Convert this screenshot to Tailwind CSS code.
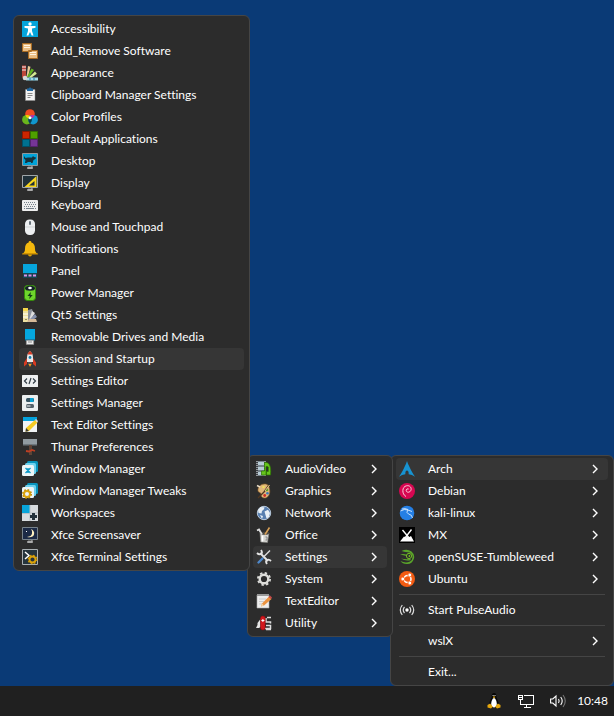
<!DOCTYPE html>
<html lang="en">
<head>
<meta charset="utf-8">
<title>Desktop menu</title>
<script src="https://cdn.jsdelivr.net/npm/@tailwindcss/browser@4"></script>
</head>
<body class="flex min-h-screen flex-col bg-[#0a3a76] font-[Lato,'Open_Sans',sans-serif] text-xs text-white [font-variant-ligatures:none]">
<main class="relative grow">
  <div id="root-menu" role="menu" aria-label="Distributions" class="absolute right-0 bottom-0 w-56 rounded-md border border-[#454545] bg-[#2c2c2c] px-[5px] py-0.5"></div>
  <div id="category-menu" role="menu" aria-label="Arch" class="absolute right-[221px] bottom-[49px] w-[146px] rounded-md border border-[#454545] bg-[#2c2c2c] px-[5px] py-0.5"></div>
  <div id="settings-menu" role="menu" aria-label="Settings" class="absolute right-[364px] bottom-[115px] w-[237px] rounded-md border border-[#454545] bg-[#2c2c2c] px-[5px] py-0.5"></div>
</main>
<footer class="flex h-[30px] items-center justify-end bg-[#202020] pr-1.5">
  <button aria-label="Linux" class="mr-4"><svg class="size-4" viewBox="0 0 16 16"><path d="M8 0C6 0 5.700 1.500 5.800 3.500 5.800 5.500 3.200 8 3.200 11.500L5 15h6l1.800-3.500C12.800 8 10.300 5.500 10.300 3.500 10.300 1.500 10 0 8 0z" fill="#050505"/><path d="M8 5c-1.200 0-2.800 3-2.800 6 0 2 1 3.500 2.800 3.500s2.800-1.500 2.800-3.500c0-3-1.600-6-2.800-6z" fill="#fff"/><path d="M6.700 4 8 3.200 9.400 4 8 5.200zM1.500 12l2.600-1.500 2.800 3.300L5 15.600l-3.500-1zM14.500 12l-2.600-1.500-2.800 3.300 1.900 1.800 3.500-1z" fill="#e6a70d"/><path d="M6.600 2h1v1h-1zM8.500 2h1v1h-1z" fill="#ddd"/></svg></button>
  <button aria-label="Network" class="mr-4"><svg class="size-4" viewBox="0 0 16 16" fill="none" stroke="#fff" shape-rendering="crispEdges"><path d="M5.500 2.500h10v8.500h-10M5.500 14.500h7M8.500 11v3M.5 2.500h4v4h-4zM2.500 6.500v5h3M.5 4.500h4"/></svg></button>
  <button aria-label="Volume" class="mr-2.5"><svg class="h-4 w-[17px]" viewBox="0 0 17 16" fill="none" stroke="#fff" stroke-width="1.100"><path d="M.6 6h2.200L6 3v10L2.800 10H.6zM8.500 6q1.300 2 0 4M10.700 4q3 4 0 8"/><path d="M13 2q4.500 6 0 12" stroke="#777"/></svg></button>
  <time class="leading-4">10:48</time>
</footer>
<script>
const monitor = '<path d="M6 13h4v1.500H5.500v1h5v-1H10V13" fill="#ddd" stroke="#ccc" stroke-width=".5"/>';
const icons = {
  access: '<path fill="#04a5dc" d="M0 0h16v16H0z"/><circle cx="8" cy="3" r="1.700" fill="#fff"/><path d="M2.500 5h11v1.800L10 7.500V10l1.500 4.500H9.700L8 11l-1.700 3.500H4.500L6 10V7.500l-3.500-.7z" fill="#fff"/>',
  packages: '<path d="M.5.5h9v8h-9zM6.500 7.500h9v8h-9z" fill="#e9bd83" stroke="#a86b22"/><path d="M2 2.500h6M2 4.500h6M8 9.500h6M8 11.500h6" stroke="#fff3df"/>',
  appearance: '<path d="M0 .5h4V14H1.500L0 12z" fill="#bd463a"/><path d="M0 2h4M0 5h4" stroke="#eee"/><path d="M4.500 12 6 1l2.500.8L6 12z" fill="#e9c997"/><path d="m5 12 4.500-8.500L12 5 7 12z" fill="#62b320"/><path d="m6.500 12.500 6.500-6 1.800 2.300-6 4.200z" fill="#d3e993"/><path d="M4 12.500h12v3H4z" fill="#a4d9e5"/><path d="M8 12.500v3M12 12.500v3" stroke="#207fa5"/><circle cx="3" cy="13" r="2.300" fill="#d8d8d8"/>',
  clipboard: '<path d="M3.500 2.500h9.500v11H3.500z" fill="#f3f3f3" stroke="#888" stroke-width=".5"/><path d="M5 1.500h1.500a1.600 1.600 0 0 1 3 0H11v2.500H5z" fill="#2268a0"/><path d="M5.500 6.500h5M5.500 8.500h5M5.500 10.500h3" stroke="#888"/>',
  color: '<circle cx="8" cy="5" r="4.800" fill="#f04b23"/><circle cx="4.900" cy="10.700" r="4.800" fill="#6ab51c"/><circle cx="11.100" cy="10.700" r="4.800" fill="#1096ce"/><path d="M8 7a4.800 4.800 0 0 1 1.500 5.500A4.800 4.800 0 0 1 8 14.400 4.800 4.800 0 0 1 8 7z" fill="#073d4d"/><path d="M3.400 6.300A4.800 4.800 0 0 1 8 7a4.800 4.800 0 0 0-1.600 2.500 4.800 4.800 0 0 1-3-3.200z" fill="#f7c900"/><path d="M12.600 6.300A4.800 4.800 0 0 0 8 7a4.800 4.800 0 0 1 1.600 2.500 4.800 4.800 0 0 0 3-3.200z" fill="#c82a9e"/><circle cx="8" cy="8.700" r="1.500" fill="#fff"/>',
  defaults: '<path d="M.5.5h7v7h-7z" fill="#cc2500" stroke="#8c1800"/><path d="M8.500.5h7v7h-7z" fill="#4fa000" stroke="#347000"/><path d="M.5 8.500h7v7h-7z" fill="#00718f" stroke="#005068"/><path d="M8.500 8.500h7v7h-7z" fill="#753596" stroke="#54236d"/>',
  desktop: monitor + '<path d="M.5.5h15v12H.5z" fill="#02a3d8" stroke="#8f999d"/><path d="m2 3 1.500 2L6 4.500h4l1-1.500 1 1 2 .5-.5 1.500-2 1-1 3H9V9H6l-1.500 1H3l.5-3L2 5.500z" fill="#16323c"/>',
  display: monitor + '<path d="M.5.5h15v12H.5z" fill="#203039" stroke="#a0a6a9"/><path d="M14.500 1v11H2.500zM12.500 6 7 10.500h5.500z" fill="#f8d51e" fill-rule="evenodd"/>',
  keyboard: '<rect y="3" width="16" height="11" rx="1" fill="#eee"/><path d="M2 5.500h12M3 7.500h11M2 9.500h12" stroke="#76818a" stroke-dasharray="1 1"/><path d="M2 11.500h1m1 0h8m1 0h1" stroke="#76818a"/>',
  mouse: '<rect x="3" y=".5" width="10" height="15.500" rx="4.500" fill="#eceef0"/><path d="M3 8h10" stroke="#d0d3d5"/><rect x="7" y="2" width="2" height="4" rx="1" fill="#67717a"/>',
  bell: '<path d="M8 0a1.300 1.300 0 0 1 1.300 1.500C12 2.200 13 4.500 13 8c0 2.500 1 4 3 5H0c2-1 3-2.500 3-5 0-3.500 1-5.800 3.700-6.500A1.300 1.300 0 0 1 8 0z" fill="#f4b80d"/><path d="M0 13.500h16l-1-1.500H1z" fill="#cf9100"/><path d="M6 13.500h4q-.3 2-2 2t-2-2z" fill="#e2a402"/>',
  panel: '<path fill="#06a5dc" d="M1 1h14v9H1z"/><path fill="#174451" d="M1 10h14v5H1z"/><path fill="#dd91e5" d="M2 11.500h3v2H2zM6.500 11.500h3v2h-3zM11 11.500h3v2h-3z"/>',
  power: '<rect x="2.500" y=".5" width="11" height="15" rx="3" fill="#6ed52c" stroke="#348a0a"/><ellipse cx="8" cy="3.200" rx="5" ry="2.500" fill="#172429"/><ellipse cx="8" cy="3" rx="1.800" ry="1.200" fill="#fff"/><path d="M8.800 7 5.500 11h2.300l-.6 3L10.700 9.900H8.500z" fill="#123a16"/>',
  qt: '<path d="M1 1h5v14H1z" fill="#eee1a0"/><path d="M1 1h5v3H1z" fill="#f5d64b"/><path d="M1 7h5M1 10h5" stroke="#fff"/><path d="m6 3 4-1 1 3-4 8H6z" fill="#8a8f99"/><path d="m7 13 3-9 3 2-5 8z" fill="#ddd"/><path d="m7 13 6-6 2 3-7 5z" fill="#8792ad"/><path d="M7 12h7l1 3H5z" fill="#d8bb99"/><path d="M3.500 12.500h1" stroke="#333"/>',
  drive: '<path fill="#05a6dd" d="M3 0h10v11H3z"/><path fill="#087aa5" d="M3 10h10v1.500H3z"/><path fill="#ececec" stroke="#8b8b8b" stroke-width=".6" d="M4.300 11.300h7.400v4.200H4.300z"/><path d="M6 13h4" stroke="#8b8b8b"/>',
  rocket: '<path d="M8 0q3 2.500 3 6v5H5V6q0-3.500 3-6z" fill="#e9e9e9"/><path d="M8 0q1.800 1.400 2.500 3.500h-5Q6.200 1.400 8 0zM5 7v6l-3 2.500v-4zM11 7v6l3 2.500v-4z" fill="#d83b22"/><circle cx="8" cy="6.500" r="1.400" fill="#147dab"/><path d="M6 11h4v2.500H6z" fill="#555"/><path d="M6.500 13h3L8 16z" fill="#ff9d1c"/>',
  code: '<rect y="2" width="16" height="12" rx=".5" fill="#eef0f1"/><path d="M5 5.500 2.500 8 5 10.500M11 5.500 13.500 8 11 10.500M9 5l-2 6" fill="none" stroke="#303b44" stroke-width="1.200"/>',
  toggles: '<rect width="16" height="16" rx="1" fill="#eceff0"/><rect x="4" y="3" width="8" height="4" rx="1.500" fill="#385563"/><path d="M8 3h3.500v4H8z" fill="#05a4d7"/><rect x="4" y="9" width="8" height="4" rx="1.500" fill="#536069"/><path d="M4.500 10h4v2h-4z" fill="#a1aab0"/>',
  editor: '<path fill="#f1f4f5" d="M1 1h14v14H1z"/><path fill="#05a2dc" d="M1 0h14v4H1z"/><path d="m4 11 9-8 2.500 2.500L7 14l-3.500.8z" fill="#f5cb23"/><path d="m4 11 3 3-3.500.8z" fill="#3a3a3a"/><path d="m13 3 1-1L16 4l-.7 1.500z" fill="#dfdfdf"/>',
  thunar: '<path fill="#919ba1" d="M1 0h14v6H1z"/><path fill="#6e777c" d="M1 5h14v1.500H1z"/><path fill="#5d4335" d="M7 6h3v10H7z"/><path d="m4 12 3 .5 3-1.500 3 1" stroke="#bd3f23" stroke-width="1.800" fill="none"/>',
  windows: '<rect x="5" y="0" width="11" height="11" rx="1.500" fill="#0994bd"/><rect x="3" y="2" width="11" height="11" rx="1.500" fill="#6ed1ee"/><rect x="0" y="4" width="12" height="11" rx="1.500" fill="#edf5f7"/><path d="m3.500 7 5 5m0-5-5 5M6 7v1.500m0 2v1.500" stroke="#0797c6" stroke-width="1.300"/>',
  tweaks: '<rect x="5" y="0" width="11" height="11" rx="1.500" fill="#0994bd"/><rect x="3" y="2" width="11" height="11" rx="1.500" fill="#6ed1ee"/><rect x="0" y="4" width="12" height="11" rx="1.500" fill="#edf5f7"/><circle cx="5" cy="11" r="3" fill="none" stroke="#dda50c" stroke-width="2"/><circle cx="5" cy="11" r="4.300" fill="none" stroke="#c18b00" stroke-width="1.400" stroke-dasharray="1.700 1.680"/>',
  spaces: '<path fill="#d8dcdf" d="M0 0h16v16H0z"/><path fill="#08a5da" d="M0 0h8v8H0z"/><path d="M8 0v8h8M0 8.500h8V16" fill="none" stroke="#b9c0c5"/><path d="M11.500 8v7M8 11.500h7" stroke="#24323c" stroke-width="3"/>',
  saver: monitor + '<path d="M.5.5h15v12H.5z" fill="#1c2a46" stroke="#78838b"/><path d="M9 2q4 2 3 5.500T5 10q4.500-.5 5-3.500T9 2z" fill="#fff2c0"/><path d="M4 4h1v1H4z" fill="#fff"/>',
  terminal: '<path d="M.5.5h15v15H.5z" fill="#25343d" stroke="#aab0b3"/><path d="m3 3 4 3.500L3 10" fill="none" stroke="#fff" stroke-width="1.500"/><circle cx="10.500" cy="10.500" r="3" fill="none" stroke="#dda50c" stroke-width="1.800"/><circle cx="10.500" cy="10.500" r="4.200" fill="none" stroke="#d29a05" stroke-width="1.400" stroke-dasharray="1.600 1.700"/>',
  media: '<path d="M0 0h10v15H0z" fill="#383d42"/><path d="M1 0v15M9 0v15" stroke="#eee" stroke-dasharray="1 1"/><path d="M2 .5h6v4H2zM2 5.500h6v4H2zM2 10.500h6v4H2z" fill="#b7cbd5"/><path d="M8.500 1.500c4-.5 7 2 6 12.500h-4v-3.500h1.800V6q-1-1-2.300-.5V14H5.500v-4h3z" fill="#67c51d" stroke="#2d7900" stroke-width=".7"/>',
  palette: '<path d="M9.500 1C5 .5 1.500 4 2 8c.5 2 3 1 3 3-.5 3 2 4.500 4.500 4 3.500-1 5-5 4-9C13 3 12 1.300 9.500 1z" fill="#dfb67a" stroke="#8b5a23" stroke-width=".6"/><circle cx="11" cy="7" r="1.300" fill="#60a528"/><circle cx="11.500" cy="10.300" r="1.300" fill="#3e78bb"/><circle cx="8.700" cy="12.500" r="1.400" fill="#d22d25"/><circle cx="7.500" cy="4" r="1.200" fill="#f3df58"/><path d="M2 15 8 9l5-7" fill="none" stroke="#513720" stroke-width="1.300"/><path d="m9 8 4.500-6" stroke="#f0ce8e" stroke-width="1"/><path d="M1 2.500 4 4" stroke="#e9dcc6" stroke-width="1.500"/>',
  globe: '<circle cx="8" cy="8" r="6.700" fill="#587fb0" stroke="#b8c9dc" stroke-width="1"/><path d="M2 5 4.500 2l4 .3-.5 2L6 6l-.5 2.500L2.500 8zM8.500 6.500l3.500-1.800 2 3.300-1 4-2.500 1.500-1-3.500zM4 10l3 1-1 3z" fill="#e8eff5"/>',
  office: '<path d="m4 6 .8 9 6.700.5L13 6z" fill="#d6d6d2" stroke="#858581" stroke-width=".6"/><ellipse cx="8.500" cy="6.300" rx="4.500" ry="1.500" fill="#464440"/><path d="m1 3.500 2-1 3 5" fill="none" stroke="#ddd" stroke-width="1.800"/><path d="m13.500.5-4.500 7" stroke="#d9a056" stroke-width="1.600"/><path d="M6.500 8.500v6" stroke="#fff" stroke-width="1.600"/><path d="M9.500 10h1.500v3H9.500" fill="none" stroke="#888"/>',
  tools: '<path d="m4 4 8 8" stroke="#e5e5e5" stroke-width="2"/><path d="M1 4q2 2 4 1t0-4M15 12q-2-2-4-1t0 4" fill="none" stroke="#e5e5e5" stroke-width="1.800"/><path d="m14 1.500-7 7" stroke="#ddd" stroke-width="1.500"/><path d="m6.500 9.500-4 4" stroke="#4e88ca" stroke-width="2.400" stroke-linecap="round"/>',
  gear: '<circle cx="8" cy="8" r="4.300" fill="none" stroke="#dededb" stroke-width="2.400"/><circle cx="8" cy="8" r="6.100" fill="none" stroke="#dededb" stroke-width="1.800" stroke-dasharray="2.400 2.390"/>',
  note: '<path d="M1 2h12v13H1z" fill="#eee" stroke="#aaa" stroke-width=".6"/><path d="M1 1h12v2H1z" fill="#999"/><path d="M3 6h7M3 8.500h5M3 11h4" stroke="#ccc"/><path d="M13 3.500 15.500 6 8 12.500l-3 1 1-3z" fill="#eb9340"/><path d="m6 10.500 2 2-3 1z" fill="#f2d5a9"/><path d="m12.500 4 1.500-1.500 2 2L15 6z" fill="#c64b4b"/>',
  knife: '<path d="m0 13 1.500-3V8L4.500 4v8L3 13z" fill="#e5e5e5"/><path d="M15 2.500h-4M10 3v4h4.500v1.500M10 10.500h4.500v3H9M10 14.500h5" fill="none" stroke="#ddd" stroke-width="1.500"/><rect x="4.500" y="1" width="4.700" height="14" rx="2.300" fill="#d3191e" stroke="#90090c" stroke-width=".5"/><path d="M6.900 4v3M5.400 5.500h3" stroke="#fff"/>',
  arch: '<path d="M8 0C7.500 2 3.500 11 0 15.700q3-2.200 6.300-2.500-.5-3 1.700-4 2.200 1 1.700 4 3.300.3 6.300 2.500C12.500 11 8.500 2 8 0z" fill="#1793d1"/>',
  debian: '<circle cx="8" cy="8" r="8" fill="#d70751"/><path d="M7 13.500C2.500 11 3 3.500 7.500 2.800 11 2 13 5 11.800 7.500 10.500 10.200 7 9.500 7.200 7.200q.5-2 2.500-1.200" fill="none" stroke="#fbd0dd" stroke-width="1"/>',
  kali: '<circle cx="8" cy="8" r="7.300" fill="#247fe5"/><path d="M1.500 6q4-2.500 7.500-1l4 1.500M3 4q3-1 6 .5M9 5q-2.500 2.500.5 4 3.500.5 4 4" fill="none" stroke="#d7eaff" stroke-width=".9"/>',
  mx: '<path d="M0 0h16v16H0z"/><path d="M1 14.500 5 9.500l2 1 1-1 1.500 1L12 9l3 5.500z" fill="#fff"/><path d="m3.500 3 7.500 9M12.500 2.500 6 11" stroke="#fff" stroke-width="1.400"/>',
  suse: '<path d="M2.500 2Q8-.5 12.500 2.500q3.500 3 2.500 7-2 6-7.500 5.500-4 0-6-3 5 2.500 9.500.5 3-2 2.500-5.500-1-3.500-5-3.800Q5 2.800 2.500 2zM1 5.500q4-1 7 .5l-.5 1Q4.500 6 1 5.500zM2 9.500q4 1 9 .5l1 1q-5.500 1.500-10-1.500z" fill="#5aa52a"/><circle cx="10" cy="7" r="2.600" fill="none" stroke="#73ba25" stroke-width="1"/><circle cx="10.400" cy="7" r=".9" fill="#73ba25"/>',
  ubuntu: '<circle cx="8" cy="8" r="8" fill="#f35b12"/><circle cx="8.500" cy="8" r="3.500" fill="none" stroke="#fff" stroke-width="1.500"/><g fill="#fff" stroke="#f35b12" stroke-width=".8"><circle cx="3.800" cy="8" r="1.900"/><circle cx="10.800" cy="4" r="1.900"/><circle cx="10.800" cy="12" r="1.900"/></g>',
  pulse: '<circle cx="8" cy="8" r="1.700" fill="#fff"/><path d="M5.500 5q-2.500 3 0 6M10.500 5q2.500 3 0 6M3.300 3Q-.7 8 3.300 13M12.700 3q4 5 0 10" fill="none" stroke="#ddd" stroke-width="1.200"/>'
};
const arrow = '<svg class="mr-1.5 h-3 w-2 shrink-0" viewBox="0 0 8 12" fill="none" stroke="#fff" stroke-width="1.400" aria-hidden="true"><path d="m2 2 4 4-4 4"/></svg>';
function item([label, icon, sub, active]) {
  if (!label) return '<hr class="mx-[3px] my-1 border-[#454545]">';
  return `<button role="menuitem" class="${active ? 'flex h-[22px] w-full items-center rounded bg-[#363636] px-[3px] text-left' : 'flex h-[22px] w-full items-center rounded px-[3px] text-left hover:bg-[#363636]'}">
    <svg class="mr-[13px] size-4 shrink-0" viewBox="0 0 16 16" aria-hidden="true">${icons[icon] || ''}</svg>
    <span class="grow whitespace-nowrap leading-4">${label}</span>${sub ? arrow : ''}</button>`;
}
const fill = (id, rows) => document.getElementById(id).innerHTML = rows.map(item).join('');
fill('settings-menu', [
  ['Accessibility', 'access'], ['Add_Remove Software', 'packages'], ['Appearance', 'appearance'],
  ['Clipboard Manager Settings', 'clipboard'], ['Color Profiles', 'color'], ['Default Applications', 'defaults'],
  ['Desktop', 'desktop'], ['Display', 'display'], ['Keyboard', 'keyboard'], ['Mouse and Touchpad', 'mouse'],
  ['Notifications', 'bell'], ['Panel', 'panel'], ['Power Manager', 'power'], ['Qt5 Settings', 'qt'],
  ['Removable Drives and Media', 'drive'], ['Session and Startup', 'rocket', false, true],
  ['Settings Editor', 'code'], ['Settings Manager', 'toggles'], ['Text Editor Settings', 'editor'],
  ['Thunar Preferences', 'thunar'], ['Window Manager', 'windows'], ['Window Manager Tweaks', 'tweaks'],
  ['Workspaces', 'spaces'], ['Xfce Screensaver', 'saver'], ['Xfce Terminal Settings', 'terminal']
]);
fill('category-menu', [
  ['AudioVideo', 'media', true], ['Graphics', 'palette', true], ['Network', 'globe', true], ['Office', 'office', true],
  ['Settings', 'tools', true, true], ['System', 'gear', true], ['TextEditor', 'note', true], ['Utility', 'knife', true]
]);
fill('root-menu', [
  ['Arch', 'arch', true, true], ['Debian', 'debian', true], ['kali-linux', 'kali', true], ['MX', 'mx', true],
  ['openSUSE-Tumbleweed', 'suse', true], ['Ubuntu', 'ubuntu', true], [],
  ['Start PulseAudio', 'pulse'], [], ['wslX', '', true], [], ['Exit...', '']
]);
</script>
</body>
</html>
